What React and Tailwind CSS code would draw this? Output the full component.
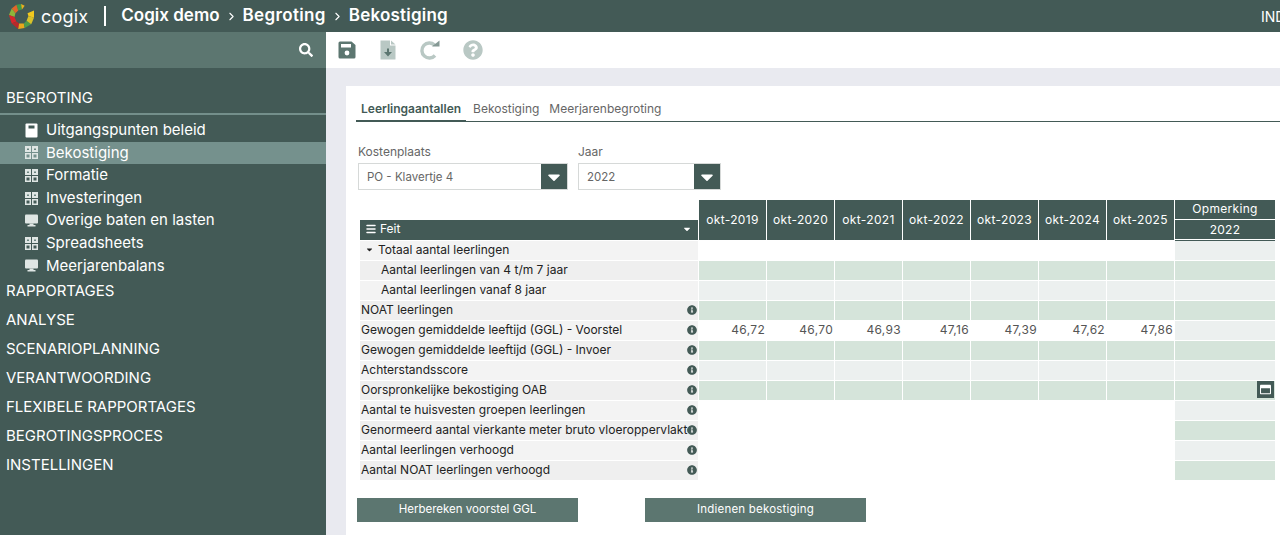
import React from 'react';
import { ChevronRight, Menu } from 'lucide-react';
import { FaSearch, FaQuestionCircle, FaInfoCircle, FaCaretDown, FaRegWindowMaximize } from 'react-icons/fa';

const font = { fontFamily: 'Inter, "Open Sans", sans-serif' };

const menuItems = [
  { label: 'Uitgangspunten beleid', icon: 'book' },
  { label: 'Bekostiging', icon: 'grid', active: true },
  { label: 'Formatie', icon: 'grid' },
  { label: 'Investeringen', icon: 'grid' },
  { label: 'Overige baten en lasten', icon: 'desk' },
  { label: 'Spreadsheets', icon: 'grid' },
  { label: 'Meerjarenbalans', icon: 'desk' },
];

const sections = ['RAPPORTAGES', 'ANALYSE', 'SCENARIOPLANNING', 'VERANTWOORDING', 'FLEXIBELE RAPPORTAGES', 'BEGROTINGSPROCES', 'INSTELLINGEN'];

const years = ['okt-2019', 'okt-2020', 'okt-2021', 'okt-2022', 'okt-2023', 'okt-2024', 'okt-2025'];
const ggl = ['46,72', '46,70', '46,93', '47,16', '47,39', '47,62', '47,86'];

// cell: data cells colour, last: remark column colour
const rows = [
  { label: 'Totaal aantal leerlingen', cell: 'white', last: 'grey', caret: true },
  { label: 'Aantal leerlingen van 4 t/m 7 jaar', cell: 'green', last: 'green', indent: true },
  { label: 'Aantal leerlingen vanaf 8 jaar', cell: 'grey', last: 'grey', indent: true },
  { label: 'NOAT leerlingen', cell: 'green', last: 'green', info: true },
  { label: 'Gewogen gemiddelde leeftijd (GGL) - Voorstel', cell: 'white', last: 'grey', info: true, values: ggl },
  { label: 'Gewogen gemiddelde leeftijd (GGL) - Invoer', cell: 'green', last: 'green', info: true },
  { label: 'Achterstandsscore', cell: 'grey', last: 'grey', info: true },
  { label: 'Oorspronkelijke bekostiging OAB', cell: 'green', last: 'green', info: true, note: true },
  { label: 'Aantal te huisvesten groepen leerlingen', cell: 'white', last: 'grey', info: true },
  { label: 'Genormeerd aantal vierkante meter bruto vloeroppervlakte', cell: 'white', last: 'green', info: true },
  { label: 'Aantal leerlingen verhoogd', cell: 'white', last: 'grey', info: true },
  { label: 'Aantal NOAT leerlingen verhoogd', cell: 'white', last: 'green', info: true },
];

const cellBg = { white: 'bg-white', green: 'bg-[#d5e4da]', grey: 'bg-[#ecf0ef]' };

const Logo = () => (
  <svg width="26" height="26" viewBox="0 0 28 28" className="shrink-0">
    <path d="M9 2 L14 1 L15 7 L11 8 Z" fill="#3f9a4a" />
    <path d="M14 1 L18 3 L15 7 Z" fill="#e8b21f" />
    <path d="M4 6 L9 2 L11 8 L8 11 Z" fill="#e2662a" />
    <path d="M1 13 L4 6 L8 11 L7 15 Z" fill="#8fb43a" />
    <path d="M1 13 L7 15 L9 20 L4 22 Z" fill="#d8262c" />
    <path d="M4 22 L9 20 L12 22 L11 28 Z" fill="#b72a2a" />
    <path d="M11 28 L12 22 L17 22 L18 27 Z" fill="#e9a81c" />
    <path d="M17 22 L20 19 L25 23 L18 27 Z" fill="#4f9c4a" />
    <path d="M20 19 L22 14 L28 16 L25 23 Z" fill="#d9c22a" />
    <path d="M21 11 L28 8 L28 16 L22 14 Z" fill="#f2c91e" />
  </svg>
);

const NavIcon = ({ type }) => {
  if (type === 'book') {
    return (
      <svg width="13" height="15" viewBox="0 0 13 15">
        <rect x="0.5" y="0.5" width="12" height="14" rx="1" fill="#fff" />
        <rect x="3.5" y="2.5" width="6" height="3" fill="#435a56" />
      </svg>
    );
  }
  if (type === 'desk') {
    return (
      <svg width="13" height="13" viewBox="0 0 13 13">
        <rect x="0" y="0.5" width="13" height="9" rx="1" fill="#dfe6e4" />
        <rect x="4.5" y="9.5" width="4" height="2" fill="#dfe6e4" />
        <rect x="2.5" y="11" width="8" height="1.5" fill="#dfe6e4" />
      </svg>
    );
  }
  return (
    <svg width="13" height="13" viewBox="0 0 13 13" fill="none">
      <rect x="0" y="0" width="6" height="6" fill="#dfe6e4" />
      <rect x="7" y="0" width="6" height="6" fill="#dfe6e4" />
      <rect x="0.75" y="7.75" width="4.5" height="4.5" stroke="#dfe6e4" strokeWidth="1.5" />
      <rect x="7.75" y="7.75" width="4.5" height="4.5" stroke="#dfe6e4" strokeWidth="1.5" />
      <rect x="2" y="2.5" width="2" height="1.5" fill="#6b8580" />
      <rect x="9" y="2.5" width="2" height="1.5" fill="#6b8580" />
    </svg>
  );
};

const SaveIcon = () => (
  <svg width="18" height="18" viewBox="0 0 18 18">
    <path d="M2 0.5 H13.5 L17.5 4 V16 A1.5 1.5 0 0 1 16 17.5 H2 A1.5 1.5 0 0 1 0.5 16 V2 A1.5 1.5 0 0 1 2 0.5 Z" fill="#5c7670" />
    <rect x="3" y="3" width="10" height="3.5" fill="#fff" />
    <circle cx="9" cy="12" r="2.4" fill="#fff" />
  </svg>
);

const FileIcon = () => (
  <svg width="16" height="20" viewBox="0 0 16 20">
    <path d="M0.5 0.5 H10 V5.5 H15.5 V19 A0.5 0.5 0 0 1 15 19.5 H1 A0.5 0.5 0 0 1 0.5 19 Z" fill="#b9c8c4" />
    <path d="M11 0.5 L15.5 4.5 H11 Z" fill="#b9c8c4" />
    <path d="M7 8.5 H9 V12 H12 L8 16.5 L4 12 H7 Z" fill="#5c7670" />
  </svg>
);

const RedoIcon = () => (
  <svg width="20" height="20" viewBox="0 0 20 20" fill="none">
    <path d="M14.5 5 A7.5 7.5 0 1 0 15 15.5" stroke="#b9c8c4" strokeWidth="3.4" />
    <path d="M12 6.5 L19.5 0.5 V6.5 Z" fill="#5c7670" opacity="0.75" />
  </svg>
);

const Dropdown = ({ label, value, width }) => (
  <div className={width}>
    <div className="text-[12px] leading-[14px] text-[#666] mt-px mb-[4px]">{label}</div>
    <div className="flex h-[27px] border border-[#d6d9d8] bg-white">
      <div className="flex-1 pl-[8px] text-[11.5px] leading-[26px] text-[#666]">{value}</div>
      <div className="w-[26px] bg-[#435a56] flex items-center justify-center">
        <FaCaretDown size={20} className="text-white" />
      </div>
    </div>
  </div>
);

export default function App() {
  return (
    <div className="h-[535px] w-[1280px] overflow-hidden flex flex-col bg-white" style={font}>
      <header className="h-[32px] shrink-0 bg-[#435a56] flex items-center text-white relative">
        <div className="ml-[8px]"><Logo /></div>
        <span className="ml-[7px] text-[18px] tracking-[0.2px]">cogix</span>
        <span className="ml-[16px] w-[2px] h-[20px] bg-white" />
        <span className="ml-[15px] text-[17px] font-semibold">Cogix demo</span>
        <ChevronRight size={13} className="mx-[5px]" />
        <span className="text-[17px] font-semibold tracking-[0.35px]">Begroting</span>
        <ChevronRight size={13} className="mx-[5px]" />
        <span className="text-[17px] font-semibold tracking-[0.2px]">Bekostiging</span>
        <span className="absolute left-[1261px] text-[14px]">IND</span>
      </header>

      <div className="flex flex-1 min-h-0">
        <aside className="w-[326px] shrink-0 bg-[#435a56] text-white">
          <div className="h-[36px] bg-[#5c7670] flex items-center justify-end pr-[13px]">
            <FaSearch size={14} />
          </div>
          <div className="h-[39px] mt-[8px] border-b-2 border-[#748f8b] pl-[6px] pt-[13px] text-[15px] leading-[18px]">BEGROTING</div>
          <div className="mt-[4px]">
            {menuItems.map((m) => (
              <div key={m.label} className={`h-[22.6px] flex items-center pl-[25px] gap-[8px] text-[15px] ${m.active ? 'bg-[#75918d]' : ''}`}>
                <span className="w-[13px] flex justify-center"><NavIcon type={m.icon} /></span>
                {m.label}
              </div>
            ))}
          </div>
          <div>
            {sections.map((s) => (
              <div key={s} className="h-[29px] pl-[6px] flex items-center text-[15px]">{s}</div>
            ))}
          </div>
        </aside>

        <main className="flex-1 min-w-0 flex flex-col">
          <div className="h-[36px] shrink-0 flex items-center pl-[12px]">
            <SaveIcon />
            <span className="ml-[24px]"><FileIcon /></span>
            <span className="ml-[24px]"><RedoIcon /></span>
            <span className="ml-[23px]"><FaQuestionCircle size={20} className="text-[#b9c8c4]" /></span>
          </div>
          <div className="flex-1 bg-[#e9eaf0] pt-[18px] pl-[20px] min-h-0">
            <div className="h-full bg-white pl-[10px] pt-[14px]">
              <div className="flex border-b border-[#435a56] h-[22px] text-[12px] leading-[18px]">
                <div className="px-[5px] font-semibold text-[#435a56] border-b-2 border-[#435a56] h-[22px] mr-[4px]">Leerlingaantallen</div>
                <div className="px-[3px] text-[#666] mr-[4px]">Bekostiging</div>
                <div className="px-[3px] text-[#666]">Meerjarenbegroting</div>
              </div>

              <div className="flex gap-[10px] ml-[2px] mt-[22px]">
                <Dropdown label="Kostenplaats" value="PO - Klavertje 4" width="w-[210px]" />
                <Dropdown label="Jaar" value="2022" width="w-[143px]" />
              </div>

              <div className="mt-[10px] ml-[4px] grid grid-cols-[339px_repeat(7,68px)_100px] text-[12px]">
                <div className="flex flex-col justify-end pr-px pb-px">
                  <div className="h-[20px] pb-[2px] bg-[#435a56] text-white flex items-center pl-[5px] gap-[3px]">
                    <Menu size={12} strokeWidth={3} />
                    <span>Feit</span>
                    <FaCaretDown size={10} className="ml-auto mr-[6px]" />
                  </div>
                </div>
                {years.map((y) => (
                  <div key={y} className="h-[41px] bg-[#435a56] text-white tracking-[0.35px] flex items-center justify-center border-r border-b border-white">{y}</div>
                ))}
                <div className="h-[41px] bg-[#435a56] text-white tracking-[0.3px] flex flex-col text-center">
                  <div className="h-[20px] leading-[17px] border-b border-white">Opmerking</div>
                  <div className="h-[20px] leading-[20px] border-b border-white">2022</div>
                </div>

                {rows.map((r, i) => (
                  <React.Fragment key={r.label}>
                    <div className={`h-[20px] pb-[2px] border-b border-r border-white flex items-center relative text-[#222] overflow-hidden ${i % 2 ? 'bg-[#efefef]' : 'bg-[#f3f3f3]'}`}>
                      {r.caret && <FaCaretDown size={9} className="ml-[5px] mr-[4px] shrink-0" />}
                      <span className={`whitespace-nowrap ${r.indent ? 'pl-[21px]' : r.caret ? '' : 'pl-[1px]'}`}>{r.label}</span>
                      {r.info && (
                        <span className={`absolute right-0 top-0 bottom-[1px] w-[10px] flex items-center justify-end pr-[1px] ${i % 2 ? 'bg-[#efefef]' : 'bg-[#f3f3f3]'}`}>
                          <FaInfoCircle size={10} className="text-[#435a56] shrink-0" />
                        </span>
                      )}
                    </div>
                    {years.map((y, c) => (
                      <div key={y} className={`h-[20px] border-r border-b border-white text-right pr-[1px] tracking-[0.3px] leading-[17px] text-[#555] ${cellBg[r.cell]}`}>
                        {r.values ? r.values[c] : ''}
                      </div>
                    ))}
                    <div className={`h-[20px] border-b border-white flex justify-end ${cellBg[r.last]}`}>
                      {r.note && (
                        <span className="w-[17px] h-[17px] mr-px bg-[#435a56] flex items-center justify-center">
                          <FaRegWindowMaximize size={11} className="text-white" />
                        </span>
                      )}
                    </div>
                  </React.Fragment>
                ))}
              </div>

              <div className="flex gap-[67px] ml-px mt-[17px]">
                <button className="w-[221px] h-[24px] bg-[#5c7670] text-white text-[11.5px]">Herbereken voorstel GGL</button>
                <button className="w-[221px] h-[24px] bg-[#5c7670] text-white text-[11.5px] tracking-[0.2px]">Indienen bekostiging</button>
              </div>
            </div>
          </div>
        </main>
      </div>
    </div>
  );
}
